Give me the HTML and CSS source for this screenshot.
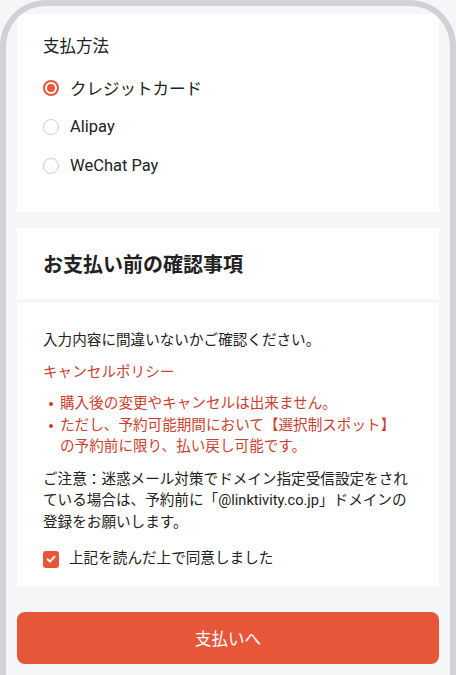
FILE: index.html
```html
<!DOCTYPE html>
<html lang="ja">
<head>
<meta charset="utf-8">
<link rel="stylesheet" href="styles.css">
</head>
<body>
<div class="frame">
  <section class="card card-method">
    <h2 class="method-title">支払方法</h2>
    <div class="radio-row"><span class="radio radio-on"></span><span>クレジットカード</span></div>
    <div class="radio-row"><span class="radio"></span><span>Alipay</span></div>
    <div class="radio-row"><span class="radio"></span><span>WeChat Pay</span></div>
  </section>
  <section class="card card-head">
    <h1 class="confirm-title">お支払い前の確認事項</h1>
  </section>
  <section class="card card-body">
    <p class="txt">入力内容に間違いないかご確認ください。</p>
    <p class="txt red policy">キャンセルポリシー</p>
    <ul class="bullets">
      <li>購入後の変更やキャンセルは出来ません。</li>
      <li>ただし、予約可能期間において【選択制スポット】の予約前に限り、払い戻し可能です。</li>
    </ul>
    <p class="txt notice">ご注意：迷惑メール対策でドメイン指定受信設定をされている場合は、予約前に「@linktivity.co.jp」ドメインの登録をお願いします。</p>
    <div class="agree">
      <span class="check"><svg viewBox="0 0 16 16" width="16" height="16"><path d="M4.6 8.3 L7 10.6 L11.4 5.8" fill="none" stroke="#fff" stroke-width="2" stroke-linecap="round" stroke-linejoin="round"/></svg></span>
      <span>上記を読んだ上で同意しました</span>
    </div>
  </section>
  <button class="pay-btn">支払いへ</button>
</div>
</body>
</html>
```
FILE: styles.css
```css
* { box-sizing: border-box; }
html, body { margin: 0; padding: 0; }
body {
  width: 456px;
  height: 675px;
  overflow: hidden;
  background: #f5f6f8;
  font-family: Roboto, "Noto Sans CJK JP", sans-serif;
  color: #222;
}
.frame {
  height: 675px;
  border: 6px solid #d2d2d6;
  border-bottom: 0;
  border-radius: 46px 46px 0 0;
  background: #f5f6f8;
  padding: 8px 11px 0;
  overflow: hidden;
}
.card {
  background: #fff;
}
.card-method {
  padding: 20px 26px 27px;
}
.method-title {
  margin: 0 0 8px;
  font-size: 16.5px;
  line-height: 26px;
  font-weight: 400;
}
.radio-row {
  height: 39px;
  display: flex;
  align-items: center;
  gap: 11px;
  font-size: 16.5px;
}
.radio {
  width: 16px;
  height: 16px;
  border-radius: 50%;
  border: 1.5px solid #cdcdcd;
  flex: none;
  display: flex;
  align-items: center;
  justify-content: center;
}
.radio-on {
  border: 2px solid #e8563a;
}
.radio-on::after {
  content: "";
  width: 8px;
  height: 8px;
  border-radius: 50%;
  background: #e8563a;
}
.card-head {
  margin-top: 16px;
  padding: 24px 26px 20px;
}
.confirm-title {
  margin: 0;
  font-size: 20px;
  line-height: 27px;
  font-weight: 700;
}
.card-body {
  margin-top: 4px;
  padding: 27px 28px 16px 26px;
  font-size: 14.6px;
  line-height: 21.5px;
}
.txt { margin: 0; }
.red { color: #cc3f30; }
.policy { margin-top: 10px; }
.bullets {
  margin: 10px 0 0;
  padding: 0 6px 0 17px;
  list-style: none;
  color: #cc3f30;
}
.bullets li { position: relative; }
.bullets li::before {
  content: "";
  position: absolute;
  left: -11px;
  top: 9px;
  width: 4px;
  height: 4px;
  border-radius: 50%;
  background: #cc3f30;
}
.notice { margin-top: 11px; }
.agree {
  margin-top: 15px;
  height: 22px;
  display: flex;
  align-items: center;
  gap: 10px;
}
.check {
  width: 16px;
  height: 17px;
  border-radius: 3px;
  background: #e8563a;
  display: flex;
  align-items: center;
  justify-content: center;
  flex: none;
}
.pay-btn {
  display: block;
  width: 100%;
  margin-top: 26px;
  height: 52px;
  border: 0;
  border-radius: 8px;
  background: #e8563a;
  color: #fff;
  font-family: Roboto, "Noto Sans CJK JP", sans-serif;
  font-size: 16.5px;
}
```
